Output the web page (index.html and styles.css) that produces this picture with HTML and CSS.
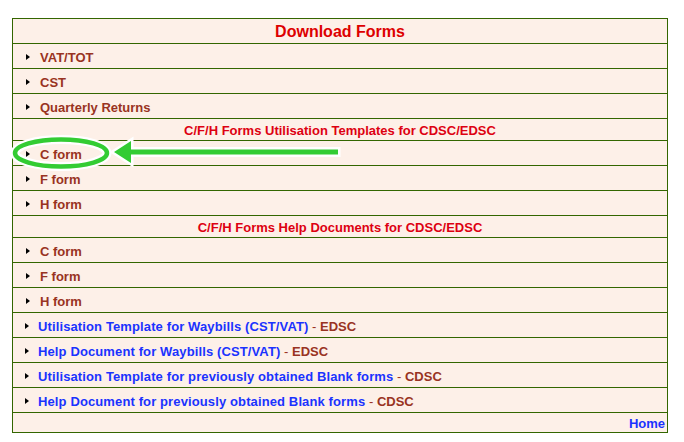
FILE: index.html
```html
<!DOCTYPE html>
<html>
<head>
<meta charset="utf-8">
<link rel="stylesheet" href="styles.css">
</head>
<body>
<div class="page">
  <div class="forms">
    <div class="row title">Download Forms</div>
    <div class="row item"><span class="tri"></span><span class="dr">VAT/TOT</span></div>
    <div class="row item"><span class="tri"></span><span class="dr">CST</span></div>
    <div class="row item"><span class="tri"></span><span class="dr">Quarterly Returns</span></div>
    <div class="row sub">C/F/H Forms Utilisation Templates for CDSC/EDSC</div>
    <div class="row item"><span class="tri"></span><span class="dr">C form</span></div>
    <div class="row item"><span class="tri"></span><span class="dr">F form</span></div>
    <div class="row item"><span class="tri"></span><span class="dr">H form</span></div>
    <div class="row sub">C/F/H Forms Help Documents for CDSC/EDSC</div>
    <div class="row item"><span class="tri"></span><span class="dr">C form</span></div>
    <div class="row item"><span class="tri"></span><span class="dr">F form</span></div>
    <div class="row item"><span class="tri"></span><span class="dr">H form</span></div>
    <div class="row item link"><span class="tri"></span><span class="bl">Utilisation Template for Waybills (CST/VAT)</span><span class="dash">&nbsp;-&nbsp;</span><span class="dr">EDSC</span></div>
    <div class="row item link"><span class="tri"></span><span class="bl">Help Document for Waybills (CST/VAT)</span><span class="dash">&nbsp;-&nbsp;</span><span class="dr">EDSC</span></div>
    <div class="row item link"><span class="tri"></span><span class="bl">Utilisation Template for previously obtained Blank forms</span><span class="dash">&nbsp;-&nbsp;</span><span class="dr">CDSC</span></div>
    <div class="row item link"><span class="tri"></span><span class="bl">Help Document for previously obtained Blank forms</span><span class="dash">&nbsp;-&nbsp;</span><span class="dr">CDSC</span></div>
    <div class="row home"><span class="bl">Home</span></div>
  </div>
  <svg class="annot" width="684" height="442" viewBox="0 0 684 442">
    <ellipse cx="61" cy="153" rx="46" ry="13.5" fill="none" stroke="#ffffff" stroke-width="9"/>
    <ellipse cx="61" cy="153" rx="46" ry="13.5" fill="none" stroke="#33cc33" stroke-width="4.5"/>
    <path d="M114 152 L131 141 L131 149.5 L338 149.5 L338 154.5 L131 154.5 L131 163 Z" fill="#33cc33" stroke="#ffffff" stroke-width="5" stroke-linejoin="miter" paint-order="stroke"/>
  </svg>
</div>
</body>
</html>
```

FILE: styles.css
```css
html, body {
  margin: 0;
  padding: 0;
  background: #ffffff;
}
.page {
  position: relative;
  width: 684px;
  height: 442px;
  padding: 18px 0 0 12px;
  box-sizing: border-box;
  font-family: "Liberation Sans", Arial, sans-serif;
  font-weight: bold;
  font-size: 13px;
}
.forms {
  width: 656px;
  box-sizing: border-box;
  border: 1px solid #336600;
  background: #fdf0e8;
  display: flex;
  flex-direction: column;
}
.row {
  display: flex;
  align-items: center;
  border-top: 1px solid #336600;
  height: 25px;
  box-sizing: border-box;
}
.row.title {
  border-top: none;
  height: 24px;
  justify-content: center;
  color: #dd0000;
  font-size: 16px;
  padding-top: 1px;
}
.row.sub {
  height: 22px;
  justify-content: center;
  color: #dd0011;
  font-size: 13px;
  padding-top: 1px;
}
.row.item {
  padding-left: 13px;
  padding-top: 2px;
}
.row.item.link {
  padding-left: 12px;
}
.row.item.link .tri {
  margin-right: 9px;
}
.row.item.link .bl {
  letter-spacing: 0.12px;
}
.row.home {
  height: 20px;
  justify-content: flex-end;
  padding-right: 2px;
  padding-top: 2px;
}
.tri {
  width: 0;
  height: 0;
  border-top: 3.5px solid transparent;
  border-bottom: 3.5px solid transparent;
  border-left: 4px solid #000000;
  margin-right: 10px;
}
.dr {
  color: #993322;
}
.bl {
  color: #1a33ff;
}
.dash {
  color: #993322;
  font-weight: normal;
}
.annot {
  position: absolute;
  left: 0;
  top: 0;
  pointer-events: none;
}
```
